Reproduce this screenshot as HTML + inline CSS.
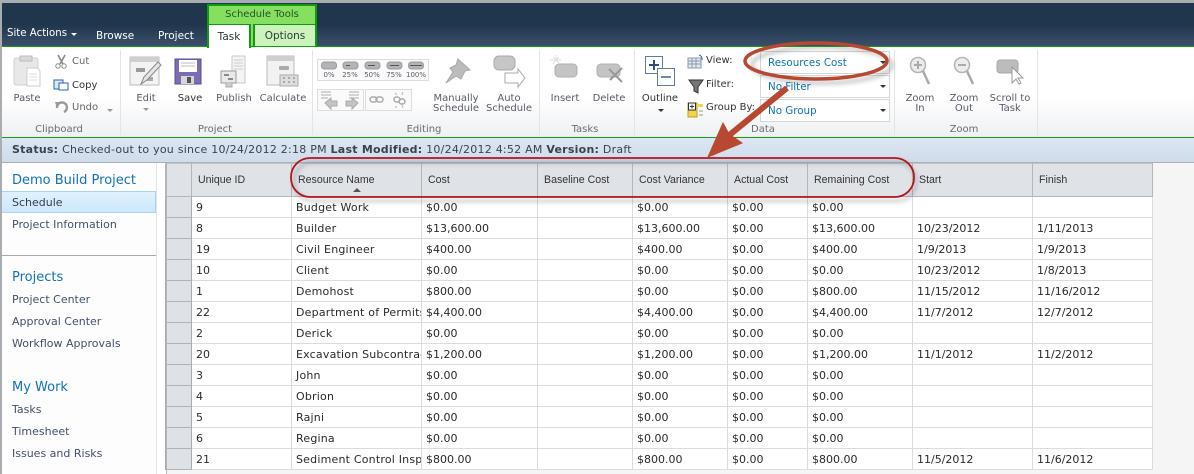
<!DOCTYPE html>
<html><head><meta charset="utf-8">
<style>
html,body{margin:0;padding:0;width:1194px;height:474px;overflow:hidden;background:#fff}
body{position:relative;font-family:"DejaVu Sans","Liberation Sans",sans-serif;font-size:10.5px;color:#4c4c4c}
.a{position:absolute;white-space:nowrap}
.c{position:absolute;text-align:center;white-space:nowrap;line-height:10px;color:#5a5a6e;font-size:10px;transform:translateX(-50%)}
.g{position:absolute;color:#6b6b78;font-size:10px;white-space:nowrap;transform:translateX(-50%)}
.sep{position:absolute;top:50px;height:85px;width:1px;background:#e2e4e6}
.tab{position:absolute;color:#fff;font-size:10.5px;white-space:nowrap}
.nh{position:absolute;left:12px;color:#0f72b8;font-size:13px;white-space:nowrap}
.ni{position:absolute;left:12px;color:#44506a;font-size:11px;white-space:nowrap}
.dd{position:absolute;left:760px;width:128px;height:21px;border:1px solid #d6d6d6;background:#fff;color:#0f72b8;font-size:10.3px;line-height:23px;text-indent:7px}
.dd i{position:absolute;right:3px;top:9px;width:0;height:0;border:3px solid transparent;border-top:3px solid #333}
table{position:absolute;left:165px;top:163px;border-collapse:collapse;table-layout:fixed;width:987px;font-size:11px;color:#2a2a2a;background:#fff}
th{background:#dfe2e7;height:33px;padding:0 0 0 6px;font:normal 10.6px "Liberation Sans",sans-serif;color:#333;text-align:left;border:1px solid #b4b6ba;border-top:1px solid #c3c5c9;box-sizing:border-box;white-space:nowrap}
td{height:21px;padding:0 0 0 4px;border:1px solid #dcdcdc;box-sizing:border-box;overflow:hidden;white-space:nowrap}
td:nth-child(3){letter-spacing:.2px}
td:first-child{background:#dee1e6;border-color:#fff #a9abaf #b0b2b6 #a9abaf;padding:0}
th:first-child{padding:0}
</style></head><body>
<div class="a" style="left:167px;top:163px;width:1027px;height:311px;background:#f5f5f5"></div>
<div class="a" style="left:0;top:0;width:1194px;height:3px;background:#a9adb2"></div>
<div class="a" style="left:0;top:3px;width:1194px;height:43px;background:linear-gradient(#20364d 0,#20364d 50%,#3a506a 100%)"></div>
<div class="a" style="left:0;top:0;width:2px;height:474px;background:#a9adb0"></div>
<div class="a" style="left:207px;top:4px;width:110px;height:42px;background:#86e060;border:1px solid #119a11;border-width:2px 2px 0;box-sizing:border-box"></div>
<div class="a" style="left:209px;top:8px;width:106px;text-align:center;color:#23502a;font-size:10px;line-height:14px">Schedule Tools</div>
<div class="a" style="left:253px;top:24px;width:64px;height:23px;background:#cdf3bd;border:solid #119a11;border-width:1px 2px 0;box-sizing:border-box;text-align:center;color:#2a3a3a;font-size:10.5px;line-height:22px">Options</div>
<div class="tab" style="left:7px;top:28px;font-size:10.2px">Site Actions</div>
<div class="a" style="left:71px;top:33px;border:3px solid transparent;border-top:3px solid #fff"></div>
<div class="tab" style="left:96px;top:30px">Browse</div>
<div class="tab" style="left:158px;top:30px">Project</div>

<div class="a" style="left:2px;top:46px;width:1192px;height:92px;background:linear-gradient(#fff 0,#fff 55%,#eef0f2 100%);border-top:1px solid #12a012;border-bottom:1px solid #1b9a1b;box-sizing:border-box"></div>
<div class="a" style="left:207px;top:24px;width:44px;height:24px;background:#fff;border:solid #119a11;border-width:1px 2px 0;box-sizing:border-box;text-align:center;color:#2a3a3a;font-size:10.5px;line-height:24px">Task</div>
<div class="sep" style="left:120px"></div><div class="sep" style="left:312px"></div><div class="sep" style="left:539px"></div><div class="sep" style="left:634px"></div><div class="sep" style="left:894px"></div><div class="sep" style="left:1037px"></div>

<svg class="a" style="left:0;top:46px" width="1194" height="92" viewBox="0 46 1194 92">
<!-- paste -->
<rect x="14" y="58" width="24" height="27" rx="2" fill="#e8e8e8" stroke="#cfcfcf"/><rect x="20" y="56" width="12" height="5" fill="#d8d8d8" stroke="#bbb"/><path d="M27 68h11l2 3v15H27z" fill="#fff" stroke="#ccc"/><path d="M29 74h8M29 77h8M29 80h8" stroke="#ddd"/>
<!-- cut/copy/undo -->
<path d="M58 55l5 9M65 55l-5 9" stroke="#888" stroke-width="1.6" fill="none"/><circle cx="58" cy="66" r="2.2" fill="none" stroke="#888"/><circle cx="64" cy="66" r="2.2" fill="none" stroke="#888"/>
<rect x="54" y="80" width="9" height="9" fill="#dce8f6" stroke="#2a66b0"/><rect x="59" y="83" width="9" height="7" fill="#fff" stroke="#2a66b0"/>
<path d="M57 108a5 5 0 1 1 7 4" fill="none" stroke="#999" stroke-width="2.4"/><path d="M55 102l5 0-3 6z" fill="#999"/>
<!-- edit -->
<rect x="130" y="57" width="29" height="28" fill="#f3f3f3" stroke="#bbb"/><rect x="130" y="57" width="29" height="5" fill="#cfcfcf"/><rect x="136" y="68" width="9" height="4" fill="#999"/><rect x="143" y="77" width="10" height="4" fill="#aaa"/><path d="M141 84l3-7 14-15 3 3-14 15z" fill="#e6e6e6" stroke="#888"/>
<!-- save -->
<path d="M175 59h26v25h-26z" fill="#7d6cb4" stroke="#5c4d92"/><rect x="179" y="60" width="18" height="12" fill="#fff"/><path d="M181 63h14M181 66h14" stroke="#bbb"/><rect x="181" y="76" width="13" height="8" fill="#d6d6d6"/><rect x="187" y="77" width="4" height="6" fill="#555"/>
<!-- publish -->
<rect x="232" y="56" width="13" height="27" fill="#f4f4f4" stroke="#c9c9c9"/><path d="M234 60h9M234 63h9M234 66h9M234 69h9" stroke="#ccc"/><rect x="221" y="71" width="15" height="12" fill="#e9e9e9" stroke="#9a9a9a"/><rect x="224" y="74" width="5" height="2" fill="#888"/><rect x="228" y="78" width="5" height="2" fill="#888"/><path d="M226 83v4h6v-4" fill="#ccc" stroke="#aaa"/>
<!-- calculate -->
<rect x="267" y="56" width="27" height="29" fill="#f2f2f2" stroke="#bbb"/><rect x="267" y="56" width="27" height="5" fill="#cfcfcf"/><rect x="279" y="66" width="10" height="4" rx="1" fill="#aaa"/><rect x="280" y="75" width="18" height="11" fill="#ddd" stroke="#aaa"/><path d="M283 78h2M288 78h2M293 78h2M283 82h2M288 82h2M293 82h2" stroke="#777"/>
<!-- percent group -->
<rect x="317.500" y="59.500" width="111" height="21" fill="#fafafa" stroke="#ddd"/>
<g fill="#b4b4b4" stroke="#9a9a9a"><rect x="321.500" y="62" width="15" height="7" rx="3"/><rect x="343" y="62" width="15" height="7" rx="3"/><rect x="365" y="62" width="15" height="7" rx="3"/><rect x="387" y="62" width="15" height="7" rx="3"/><rect x="408.500" y="62" width="15" height="7" rx="3"/></g>
<path d="M346 65.500h4M368 65.500h7M390 65.500h9M410 65.500h12" stroke="#555"/>
<rect x="317.500" y="89.500" width="46" height="21" fill="#fafafa" stroke="#ddd"/><rect x="365.500" y="89.500" width="46" height="21" fill="#fafafa" stroke="#ddd"/>
<path d="M321 92h10M321 95h10M321 98h7M349 92h10M349 95h10M349 98h10" stroke="#aaa"/>
<path d="M325 103l6-5v3h6v5h-6v3zM358 103l-6-5v3h-6v5h6v3z" fill="#c4c4c4" stroke="#aaa"/>
<rect x="370" y="97" width="7" height="5" rx="2.500" fill="none" stroke="#aaa" stroke-width="1.500"/><rect x="376" y="97" width="7" height="5" rx="2.500" fill="none" stroke="#aaa" stroke-width="1.500"/>
<rect x="394" y="97" width="6" height="5" rx="2.500" fill="none" stroke="#aaa" stroke-width="1.500"/><rect x="399" y="99" width="6" height="5" rx="2.500" fill="none" stroke="#aaa" stroke-width="1.500"/><path d="M395 93l2 2M403 92l-1 3M395 108l2-2M403 108l-1-3" stroke="#bbb"/>
<!-- pin -->
<path d="M458 59L470 70L465 71L461 79L456 76L446 83L453 72L450 68L456 65Z" fill="#bcbcbc" stroke="#a8a8a8"/>
<!-- auto -->
<rect x="494" y="56" width="21" height="14" rx="5" fill="#c6c6c6" stroke="#aaa"/><path d="M505 73h13v-4l7 9-7 9v-4h-13z" fill="#fff" stroke="#aaa"/>
<!-- insert -->
<rect x="555" y="64" width="22" height="13" rx="4" fill="#c4c4c4" stroke="#b0b0b0"/><path d="M556 60l-3-3M556 60l3-3M556 60h-6M556 60h5M556 60l-3 4M556 60l3 3M556 60v-5" stroke="#ddd"/>
<!-- delete -->
<rect x="597" y="64" width="23" height="13" rx="4" fill="#c4c4c4" stroke="#b0b0b0"/><path d="M609 69l13 13M622 68l-12 12" stroke="#999" stroke-width="2"/>
<!-- outline -->
<rect x="645.500" y="56.500" width="17" height="17" fill="#fff" stroke="#5f7d9a"/><rect x="657.500" y="68.500" width="17" height="17" fill="#fff" stroke="#5f7d9a"/><path d="M649 65h10M654 60v10" stroke="#2f4f7a" stroke-width="2"/><path d="M661 77h10" stroke="#6a8ab0" stroke-width="2"/>
<path d="M658 109h6l-3 3z" fill="#333"/>
<!-- view filter group -->
<rect x="688" y="58" width="13" height="10" fill="#e4e8f0" stroke="#8a9ab0"/><path d="M692 58v10M696 58v10M688 61h13M688 64h13" stroke="#8a9ab0"/><path d="M699 55a4 4 0 0 1 3 5" stroke="#2a66b0" fill="none"/>
<path d="M689 80h14l-5 7v6l-4-2v-4z" fill="#777" stroke="#333"/>
<rect x="688" y="103" width="9" height="14" fill="#f5d34a" stroke="#b8a030"/><rect x="688.500" y="103" width="7" height="7" fill="#fff" stroke="#333"/><path d="M690 106.500h4M692 104.500v4" stroke="#333"/><path d="M697 104h6v3h-6z" fill="#f5d34a"/><path d="M699 111h4M699 115h4" stroke="#999"/>
<!-- zoom icons -->
<circle cx="918" cy="65" r="7.500" fill="#ececec" stroke="#b5b5b5" stroke-width="1.500"/><path d="M914 65h8M918 61v8" stroke="#aaa" stroke-width="2"/><path d="M923 71l6 13" stroke="#aaa" stroke-width="2.500"/>
<circle cx="962" cy="65" r="7.500" fill="#ececec" stroke="#b5b5b5" stroke-width="1.500"/><path d="M958 65h8" stroke="#aaa" stroke-width="2"/><path d="M967 71l6 13" stroke="#aaa" stroke-width="2.500"/>
<rect x="997" y="60" width="21" height="13" rx="3" fill="#bcbcbc" stroke="#aaa"/><path d="M1012 67v16l4-4 3 5 2-1-3-5h5z" fill="#fff" stroke="#999"/>
</svg>

<div class="c" style="left:329px;top:70px;font-size:7px">0%</div><div class="c" style="left:350px;top:70px;font-size:7px">25%</div><div class="c" style="left:372px;top:70px;font-size:7px">50%</div><div class="c" style="left:394px;top:70px;font-size:7px">75%</div><div class="c" style="left:416px;top:70px;font-size:7px">100%</div>

<div class="c" style="left:27px;top:94px">Paste</div>
<div class="a" style="left:72px;top:56px;font-size:10px;color:#666;line-height:12px">Cut</div>
<div class="a" style="left:72px;top:80px;font-size:10px;color:#333;line-height:12px">Copy</div>
<div class="a" style="left:72px;top:102px;font-size:10px;color:#666;line-height:12px">Undo</div>
<div class="a" style="left:107px;top:109px;border:3px solid transparent;border-top:3px solid #999"></div>
<div class="c" style="left:146px;top:94px">Edit</div>
<div class="a" style="left:143px;top:108px;border:3px solid transparent;border-top:3px solid #999"></div>
<div class="c" style="left:190px;top:94px;color:#333">Save</div>
<div class="c" style="left:234px;top:94px">Publish</div>
<div class="c" style="left:283px;top:94px">Calculate</div>
<div class="c" style="left:456px;top:94px">Manually<br>Schedule</div>
<div class="c" style="left:509px;top:94px">Auto<br>Schedule</div>
<div class="c" style="left:565px;top:94px">Insert</div>
<div class="c" style="left:609px;top:94px">Delete</div>
<div class="c" style="left:660px;top:94px;color:#333">Outline</div>
<div class="a" style="left:706px;top:55px;font-size:10px;color:#333;line-height:12px">View:</div>
<div class="a" style="left:706px;top:79px;font-size:10px;color:#333;line-height:12px">Filter:</div>
<div class="a" style="left:706px;top:102px;font-size:10px;color:#333;line-height:12px">Group By:</div>
<div class="dd" style="top:51px">Resources Cost<i></i></div>
<div class="dd" style="top:75px">No Filter<i></i></div>
<div class="dd" style="top:99px">No Group<i></i></div>
<div class="c" style="left:920px;top:94px">Zoom<br>In</div>
<div class="c" style="left:964px;top:94px">Zoom<br>Out</div>
<div class="c" style="left:1010px;top:94px">Scroll to<br>Task</div>
<div class="g" style="left:59px;top:124px;line-height:12px">Clipboard</div><div class="g" style="left:215px;top:124px;line-height:12px">Project</div>
<div class="g" style="left:424px;top:124px;line-height:12px">Editing</div><div class="g" style="left:585px;top:124px;line-height:12px">Tasks</div>
<div class="g" style="left:763px;top:124px;line-height:12px">Data</div><div class="g" style="left:964px;top:124px;line-height:12px">Zoom</div>

<div class="a" style="left:2px;top:138px;width:1192px;height:25px;background:linear-gradient(#dbe6f2,#cfdcea);border-bottom:1px solid #a9b0b8;box-sizing:border-box;font-size:11px;letter-spacing:.24px;line-height:23px;text-indent:10px;color:#3a4250;white-space:pre"><b>Status:</b> Checked-out to you since 10/24/2012 2:18 PM <b>Last Modified:</b> 10/24/2012 4:52 AM <b>Version:</b> Draft</div>

<div class="a" style="left:2px;top:163px;width:154px;height:311px;background:#fdfdfd;border-right:1px solid #e4e4e4"></div>
<div class="nh" style="left:12px;top:173px">Demo Build Project</div>
<div class="a" style="left:2px;top:191px;width:154px;height:22px;background:linear-gradient(#e0f1fd,#cde8fb);border:1px solid #a6d4f2;border-left:0;box-sizing:border-box"></div>
<div class="ni" style="top:196px;color:#333c50">Schedule</div>
<div class="ni" style="top:218px">Project Information</div>
<div class="a" style="left:2px;top:255px;width:154px;height:1px;background:#a9a9a9"></div>
<div class="nh" style="top:270px">Projects</div>
<div class="ni" style="top:293px">Project Center</div>
<div class="ni" style="top:315px">Approval Center</div>
<div class="ni" style="top:337px">Workflow Approvals</div>
<div class="nh" style="top:380px">My Work</div>
<div class="ni" style="top:403px">Tasks</div>
<div class="ni" style="top:425px">Timesheet</div>
<div class="ni" style="top:447px">Issues and Risks</div>

<table>
<colgroup><col style="width:26px"><col style="width:100px"><col style="width:130px"><col style="width:116px"><col style="width:95px"><col style="width:95px"><col style="width:80px"><col style="width:105px"><col style="width:120px"><col style="width:120px"></colgroup>
<tr style="height:33px"><th></th><th>Unique ID</th><th>Resource Name</th><th>Cost</th><th>Baseline Cost</th><th>Cost Variance</th><th>Actual Cost</th><th>Remaining Cost</th><th style="padding-left:6px">Start</th><th>Finish</th></tr>
<tr><td></td><td>9</td><td>Budget Work</td><td>$0.00</td><td></td><td>$0.00</td><td>$0.00</td><td>$0.00</td><td></td><td></td></tr>
<tr><td></td><td>8</td><td>Builder</td><td>$13,600.00</td><td></td><td>$13,600.00</td><td>$0.00</td><td>$13,600.00</td><td>10/23/2012</td><td>1/11/2013</td></tr>
<tr><td></td><td>19</td><td>Civil Engineer</td><td>$400.00</td><td></td><td>$400.00</td><td>$0.00</td><td>$400.00</td><td>1/9/2013</td><td>1/9/2013</td></tr>
<tr><td></td><td>10</td><td>Client</td><td>$0.00</td><td></td><td>$0.00</td><td>$0.00</td><td>$0.00</td><td>10/23/2012</td><td>1/8/2013</td></tr>
<tr><td></td><td>1</td><td>Demohost</td><td>$800.00</td><td></td><td>$0.00</td><td>$0.00</td><td>$800.00</td><td>11/15/2012</td><td>11/16/2012</td></tr>
<tr><td></td><td>22</td><td>Department of Permits</td><td>$4,400.00</td><td></td><td>$4,400.00</td><td>$0.00</td><td>$4,400.00</td><td>11/7/2012</td><td>12/7/2012</td></tr>
<tr><td></td><td>2</td><td>Derick</td><td>$0.00</td><td></td><td>$0.00</td><td>$0.00</td><td>$0.00</td><td></td><td></td></tr>
<tr><td></td><td>20</td><td>Excavation Subcontractor</td><td>$1,200.00</td><td></td><td>$1,200.00</td><td>$0.00</td><td>$1,200.00</td><td>11/1/2012</td><td>11/2/2012</td></tr>
<tr><td></td><td>3</td><td>John</td><td>$0.00</td><td></td><td>$0.00</td><td>$0.00</td><td>$0.00</td><td></td><td></td></tr>
<tr><td></td><td>4</td><td>Obrion</td><td>$0.00</td><td></td><td>$0.00</td><td>$0.00</td><td>$0.00</td><td></td><td></td></tr>
<tr><td></td><td>5</td><td>Rajni</td><td>$0.00</td><td></td><td>$0.00</td><td>$0.00</td><td>$0.00</td><td></td><td></td></tr>
<tr><td></td><td>6</td><td>Regina</td><td>$0.00</td><td></td><td>$0.00</td><td>$0.00</td><td>$0.00</td><td></td><td></td></tr>
<tr><td></td><td>21</td><td>Sediment Control Inspector</td><td>$800.00</td><td></td><td>$800.00</td><td>$0.00</td><td>$800.00</td><td>11/5/2012</td><td>11/6/2012</td></tr>
</table>
<div class="a" style="left:353px;top:188px;border:4px solid transparent;border-bottom:4px solid #555;border-top:0"></div>
<div class="a" style="left:166px;top:163px;width:1px;height:311px;background:#b4b6ba"></div>

<svg class="a" style="left:0;top:0" width="1194" height="474">
<defs><filter id="s" x="-10%" y="-30%" width="120%" height="160%"><feGaussianBlur stdDeviation="2"/></filter></defs>
<rect x="294" y="162" width="622" height="39" rx="19" fill="none" stroke="#555" stroke-opacity=".45" stroke-width="2" filter="url(#s)"/>
<rect x="291" y="158" width="623" height="39" rx="19" fill="none" stroke="#b3161c" stroke-width="1.800"/>
<ellipse cx="822" cy="65" rx="70" ry="18" fill="none" stroke="#555" stroke-opacity=".4" stroke-width="3" filter="url(#s)"/>
<ellipse cx="816" cy="61" rx="71" ry="18" fill="none" stroke="#b8482f" stroke-width="3.500"/>
<path d="M787 88L727 137" fill="none" stroke="#b8482f" stroke-width="6"/>
<path d="M708 157L723 123L729 134L742 143Z" fill="#b8482f" stroke="#b8482f" stroke-width="1"/>
</svg>
</body></html>
